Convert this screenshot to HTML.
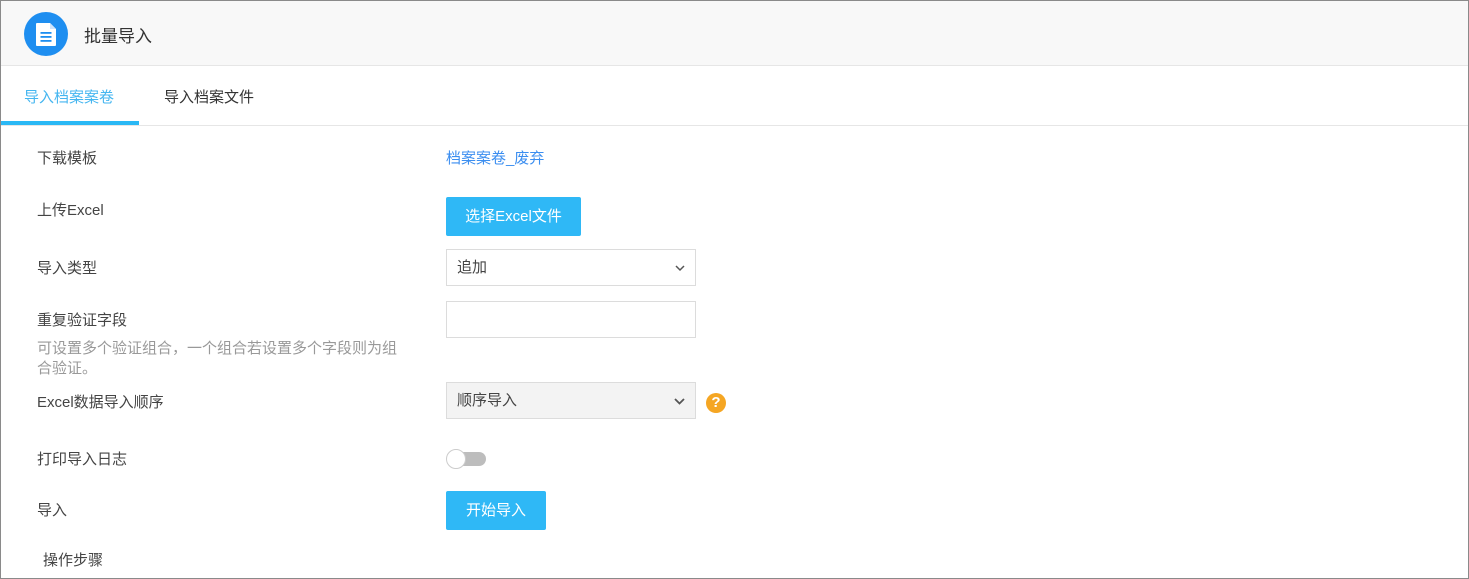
<!DOCTYPE html>
<html><head><meta charset="utf-8"><style>
*{margin:0;padding:0;box-sizing:border-box}
body{width:1469px;height:579px;overflow:hidden;background:#fff;font-family:"Liberation Sans","Noto Sans CJK SC",sans-serif;color:#444;position:relative}
.frame{position:absolute;left:0;top:0;width:1469px;height:579px;border:1px solid #8a8a8a}
.hdr{position:absolute;left:1px;top:1px;width:1467px;height:65px;background:#f8f8f8;border-bottom:1px solid #e6e6e6}
.ic{position:absolute;left:24px;top:12px;width:44px;height:44px;border-radius:50%;background:#1e8ef0}
.title{position:absolute;left:84px;top:22px;font-size:17px;color:#333}
.tab{position:absolute;top:86px;font-size:15px}
.tabline{position:absolute;left:1px;top:121px;width:138px;height:4px;background:#2ab8f5}
.tabsep{position:absolute;left:1px;top:125px;width:1467px;height:1px;background:#e6e6e6}
.lbl{position:absolute;left:37px;font-size:15px;color:#444}
.abs{position:absolute}
.btn{position:absolute;left:446px;height:39px;background:#2fb8f6;color:#fff;font-size:15px;border-radius:2px;text-align:center;line-height:39px}
.sel{position:absolute;left:446px;width:250px;height:37px;border:1px solid #dcdcdc;font-size:15px;line-height:35px;padding-left:10px;color:#444}
</style></head><body>
<div class="frame"></div>
<div class="hdr"></div>
<div class="ic"><svg width="44" height="44" viewBox="0 0 44 44"><path d="M13 11h13l6 6v16a1 1 0 0 1-1 1H13a1 1 0 0 1-1-1V12a1 1 0 0 1 1-1z" fill="#fff"/><path d="M26 11v6h6z" fill="#cfe4fb"/><rect x="16.5" y="20" width="11" height="1.8" fill="#1e8ef0"/><rect x="16.5" y="24" width="11" height="1.8" fill="#1e8ef0"/><rect x="16.5" y="28" width="11" height="1.8" fill="#1e8ef0"/></svg></div>
<div class="title">批量导入</div>
<div class="tab" style="left:24px;color:#45b6f0">导入档案案卷</div>
<div class="tab" style="left:164px;color:#333">导入档案文件</div>
<div class="tabline"></div><div class="tabsep"></div>

<div class="lbl" style="top:147px">下载模板</div>
<div class="abs" style="left:446px;top:147px;font-size:15px;color:#3b8ef0">档案案卷_废弃</div>

<div class="lbl" style="top:199px">上传Excel</div>
<div class="btn" style="top:197px;width:135px">选择Excel文件</div>

<div class="lbl" style="top:257px">导入类型</div>
<div class="sel" style="top:249px">追加<svg class="abs" style="right:10px;top:15px" width="10" height="7" viewBox="0 0 10 7"><path d="M1 1l4 4 4-4" fill="none" stroke="#555" stroke-width="1.5"/></svg></div>

<div class="lbl" style="top:309px">重复验证字段</div>
<div class="sel" style="top:301px"></div>
<div class="abs" style="left:37px;top:339px;width:420px;font-size:15px;line-height:20px;color:#999;white-space:nowrap">可设置多个验证组合，一个组合若设置多个字段则为组<br>合验证。</div>

<div class="lbl" style="top:391px">Excel数据导入顺序</div>
<div class="sel" style="top:382px;background:#f3f3f3">顺序导入<svg class="abs" style="right:10px;top:15px" width="11" height="7" viewBox="0 0 11 7"><path d="M1 1l4.5 4.5L10 1" fill="none" stroke="#555" stroke-width="1.8"/></svg></div>
<div class="abs" style="left:706px;top:393px;width:20px;height:20px;border-radius:50%;background:#f5a623;color:#fff;font-weight:bold;font-size:15px;line-height:20px;text-align:center">?</div>

<div class="lbl" style="top:448px">打印导入日志</div>
<div class="abs" style="left:447px;top:452px;width:39px;height:14px;border-radius:7px;background:#bdbdbd"></div>
<div class="abs" style="left:446px;top:449px;width:20px;height:20px;border-radius:50%;background:#fff;border:1px solid #ccc"></div>

<div class="lbl" style="top:499px">导入</div>
<div class="btn" style="top:491px;width:100px">开始导入</div>

<div class="lbl" style="left:43px;top:549px">操作步骤</div>
</body></html>
